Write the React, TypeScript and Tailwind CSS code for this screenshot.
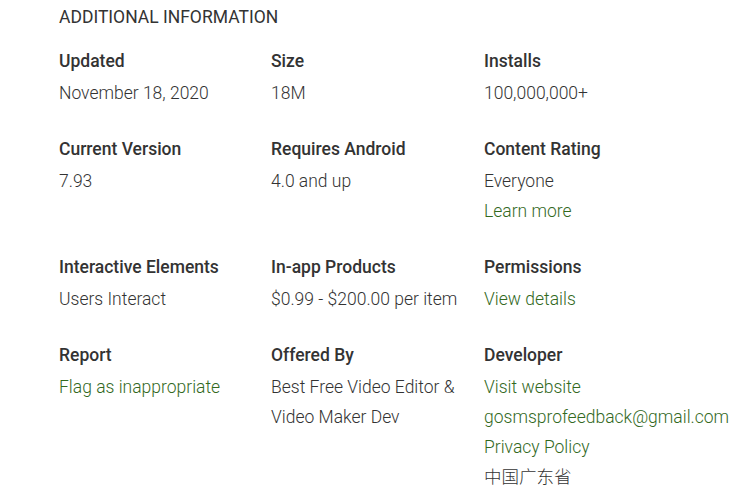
import React from "react";

type Cell = { title: string; values: { text: string; link?: boolean }[] };

const rows: Cell[][] = [
  [
    { title: "Updated", values: [{ text: "November 18, 2020" }] },
    { title: "Size", values: [{ text: "18M" }] },
    { title: "Installs", values: [{ text: "100,000,000+" }] },
  ],
  [
    { title: "Current Version", values: [{ text: "7.93" }] },
    { title: "Requires Android", values: [{ text: "4.0 and up" }] },
    {
      title: "Content Rating",
      values: [{ text: "Everyone" }, { text: "Learn more", link: true }],
    },
  ],
  [
    { title: "Interactive Elements", values: [{ text: "Users Interact" }] },
    { title: "In-app Products", values: [{ text: "$0.99 - $200.00 per item" }] },
    { title: "Permissions", values: [{ text: "View details", link: true }] },
  ],
  [
    { title: "Report", values: [{ text: "Flag as inappropriate", link: true }] },
    {
      title: "Offered By",
      values: [{ text: "Best Free Video Editor &" }, { text: "Video Maker Dev" }],
    },
    {
      title: "Developer",
      values: [
        { text: "Visit website", link: true },
        { text: "gosmsprofeedback@gmail.com", link: true },
        { text: "Privacy Policy", link: true },
        { text: "中国广东省" },
      ],
    },
  ],
];

export default function App() {
  return (
    <div
      className="w-[755px] h-[503px] bg-white overflow-hidden pl-[59px] pt-[5px] text-[#333333] text-[17.5px]"
      style={{ fontFamily: 'Roboto, "Noto Sans CJK SC", sans-serif' }}
    >
      <h2 className="uppercase font-normal leading-[24px] text-[17.5px]">Additional Information</h2>
      <div className="mt-[20px] grid grid-cols-[212px_213px_auto] gap-y-[29px]">
        {rows.flat().map((c, i) => (
          <div key={i} className="flex flex-col">
            <div className="font-medium leading-[24px]">{c.title}</div>
            <div className="mt-[5px] flex flex-col">
              {c.values.map((v, j) => (
                <span
                  key={j}
                  className={
                    "leading-[30px] font-light whitespace-nowrap " +
                    (v.link ? "text-[#33691e]" : "text-[#333333]")
                  }
                >
                  {v.text}
                </span>
              ))}
            </div>
          </div>
        ))}
      </div>
    </div>
  );
}
